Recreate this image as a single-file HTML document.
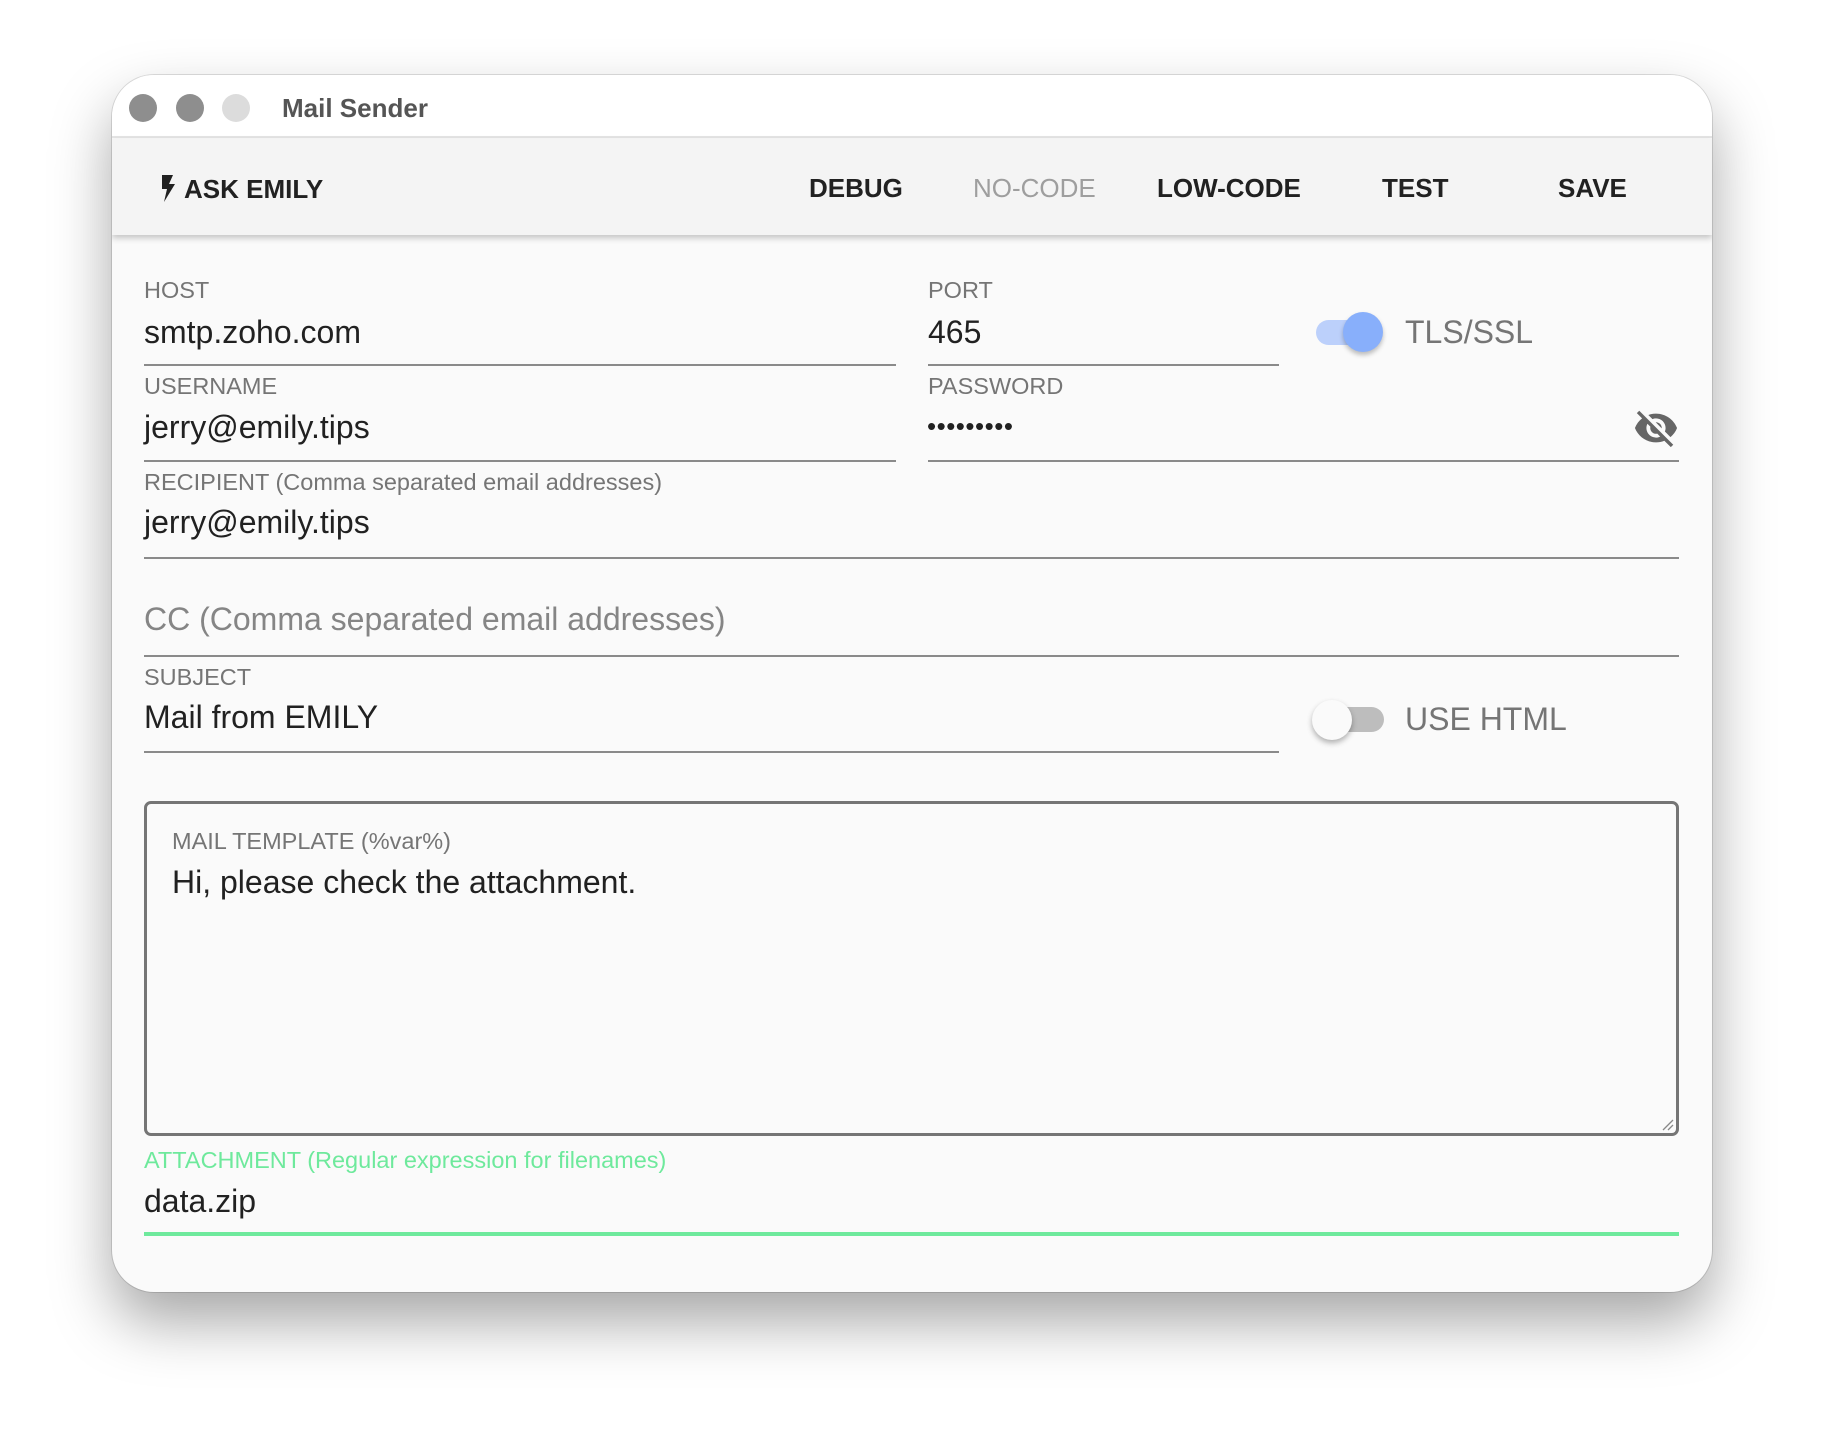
<!DOCTYPE html>
<html><head><meta charset="utf-8"><style>
*{margin:0;padding:0;box-sizing:border-box}
body{width:1824px;height:1440px;background:#fff;position:relative;overflow:hidden;font-family:"Liberation Sans",sans-serif}
.win{position:absolute;left:112px;top:75px;width:1600px;height:1217px;border-radius:42px;background:#fafafa;overflow:hidden;box-shadow:0 30px 60px rgba(0,0,0,.35),0 0 0 1px rgba(0,0,0,.12)}
.t{position:absolute;white-space:nowrap;line-height:1}
.lab{font-size:23.5px;color:#757575}
.val{font-size:32px;color:#212121}
.ul{position:absolute;height:2px;background:#8a8a8a}
.dot{position:absolute;width:28px;height:28px;border-radius:50%;top:19px}
.tb{font-size:26px;font-weight:bold;color:#212121}
</style></head><body>
<div class="win">
  <div style="position:absolute;left:0;top:0;width:1600px;height:63px;background:#fff;border-bottom:2px solid #e4e4e4"></div>
  <div class="dot" style="left:17px;background:#8e8e8e"></div>
  <div class="dot" style="left:64px;background:#8e8e8e"></div>
  <div class="dot" style="left:110px;background:#dcdcdc"></div>
  <div class="t" style="left:170px;top:20px;font-size:26px;font-weight:bold;color:#555">Mail Sender</div>
  <div style="position:absolute;left:0;top:64px;width:1600px;height:96px;background:#f4f4f4;box-shadow:0 3px 6px rgba(0,0,0,.22)"></div>
  <svg style="position:absolute;left:48px;top:100px" width="16" height="27" viewBox="0 0 16 27"><path d="M2 0h11l-4 9h6L4 27l3-13H2z" fill="#212121"/></svg>
  <div class="t tb" style="left:72px;top:101px">ASK EMILY</div>
  <div class="t tb" style="left:697px;top:100px">DEBUG</div>
  <div class="t tb" style="left:861px;top:100px;color:#9e9e9e;font-weight:normal">NO-CODE</div>
  <div class="t tb" style="left:1045px;top:100px">LOW-CODE</div>
  <div class="t tb" style="left:1270px;top:100px">TEST</div>
  <div class="t tb" style="left:1446px;top:100px">SAVE</div>

  <div class="t lab" style="left:32px;top:204px">HOST</div>
  <div class="t val" style="left:32px;top:241px">smtp.zoho.com</div>
  <div class="ul" style="left:32px;top:289px;width:752px"></div>
  <div class="t lab" style="left:816px;top:204px">PORT</div>
  <div class="t val" style="left:816px;top:241px">465</div>
  <div class="ul" style="left:816px;top:289px;width:351px"></div>
  <div style="position:absolute;left:1204px;top:245px;width:64px;height:25px;border-radius:13px;background:#bcd0fb"></div>
  <div style="position:absolute;left:1231px;top:237px;width:40px;height:40px;border-radius:50%;background:#88affb;box-shadow:0 3px 5px rgba(0,0,0,.25)"></div>
  <div class="t" style="left:1293px;top:241px;font-size:32px;color:#757575">TLS/SSL</div>

  <div class="t lab" style="left:32px;top:300px">USERNAME</div>
  <div class="t val" style="left:32px;top:336px">jerry@emily.tips</div>
  <div class="ul" style="left:32px;top:385px;width:752px"></div>
  <div class="t lab" style="left:816px;top:300px">PASSWORD</div>
  <div class="t" style="left:815px;top:338px;font-size:26px;color:#212121;letter-spacing:0.5px">•••••••••</div>
  <svg style="position:absolute;left:1521px;top:330px" width="46" height="46" viewBox="0 0 24 24"><path fill="#666" d="M12 7c2.76 0 5 2.24 5 5 0 .65-.13 1.260-.36 1.83l2.92 2.92c1.51-1.26 2.7-2.89 3.430-4.75-1.73-4.39-6-7.5-11-7.5-1.4 0-2.74.25-3.98.7l2.16 2.16C10.74 7.13 11.35 7 12 7zM2 4.27l2.28 2.28.46.46C3.08 8.3 1.78 10.020 1 12c1.73 4.39 6 7.5 11 7.5 1.550 0 3.03-.3 4.38-.84l.42.42L19.73 22 21 20.73 3.27 3 2 4.27zM7.53 9.8l1.55 1.55c-.05.21-.08.43-.08.65 0 1.66 1.34 3 3 3 .22 0 .44-.03.65-.08l1.55 1.55c-.67.33-1.41.53-2.2.53-2.76 0-5-2.24-5-5 0-.79.2-1.53.53-2.2zm4.310-.78l3.15 3.15.02-.16c0-1.66-1.34-3-3-3l-.17.01z"/></svg>
  <div class="ul" style="left:816px;top:385px;width:751px"></div>

  <div class="t lab" style="left:32px;top:396px">RECIPIENT (Comma separated email addresses)</div>
  <div class="t val" style="left:32px;top:431px">jerry@emily.tips</div>
  <div class="ul" style="left:32px;top:482px;width:1535px"></div>

  <div class="t" style="left:32px;top:528px;font-size:32px;color:#858585">CC (Comma separated email addresses)</div>
  <div class="ul" style="left:32px;top:580px;width:1535px"></div>

  <div class="t lab" style="left:32px;top:591px">SUBJECT</div>
  <div class="t val" style="left:32px;top:626px">Mail from EMILY</div>
  <div class="ul" style="left:32px;top:676px;width:1135px"></div>
  <div style="position:absolute;left:1206px;top:632px;width:66px;height:25px;border-radius:13px;background:#bdbdbd"></div>
  <div style="position:absolute;left:1200px;top:625px;width:40px;height:40px;border-radius:50%;background:#fafafa;box-shadow:0 3px 6px rgba(0,0,0,.3)"></div>
  <div class="t" style="left:1293px;top:628px;font-size:32px;color:#757575">USE HTML</div>

  <div style="position:absolute;left:32px;top:726px;width:1535px;height:335px;border:3px solid #757575;border-radius:7px"></div>
  <svg style="position:absolute;left:1548px;top:1042px" width="14" height="14" viewBox="0 0 14 14"><path d="M13 3L3 13M13 8L8 13" stroke="#888" stroke-width="1.3"/></svg>
  <div class="t lab" style="left:60px;top:755px">MAIL TEMPLATE (%var%)</div>
  <div class="t val" style="left:60px;top:791px">Hi, please check the attachment.</div>

  <div class="t lab" style="left:32px;top:1074px;color:#6ee99c">ATTACHMENT (Regular expression for filenames)</div>
  <div class="t val" style="left:32px;top:1110px">data.zip</div>
  <div style="position:absolute;left:32px;top:1157px;width:1535px;height:4px;background:#6ee99c"></div>
</div>
</body></html>
